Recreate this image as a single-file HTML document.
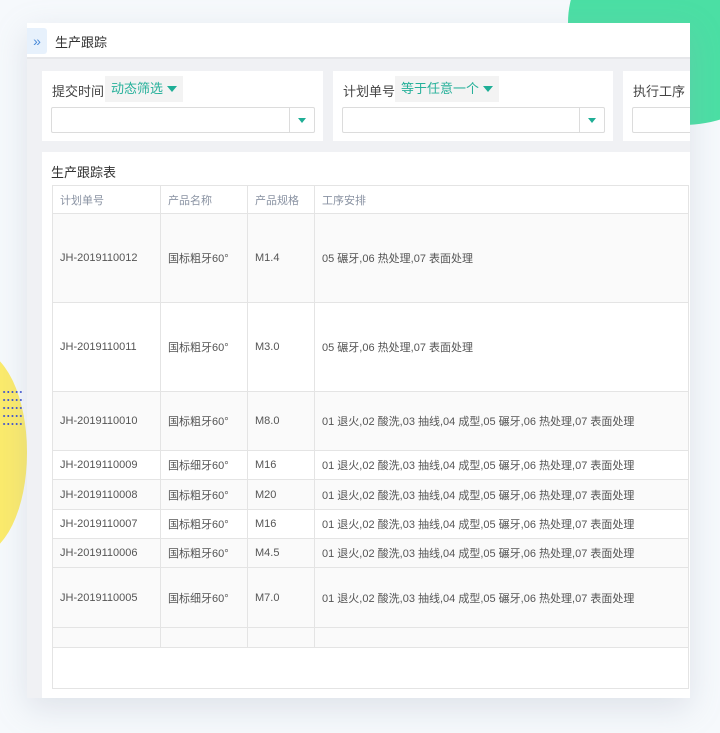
<!DOCTYPE html><html><head><meta charset="utf-8"><style>
*{box-sizing:border-box;margin:0;padding:0}
body{width:720px;height:733px;overflow:hidden;background:#f6f9fc;font-family:"Liberation Sans","Noto Sans CJK SC",sans-serif;position:relative;color:#333}
.abs{position:absolute}
.green{left:568px;top:-80px;width:230px;height:205px;border-radius:50%;background:#4bdfa4}
.yellow{left:-100px;top:350px;width:127px;height:205px;border-radius:0 50px 50px 0 / 0 102px 102px 0;background:#fbeb6c}
.dots{left:2px;top:388px;width:22px;height:38px;background-image:radial-gradient(circle,#3a4fd0 0.8px,transparent 1.2px);background-size:4.2px 8px}
.card{left:27px;top:23px;width:663px;height:675px;background:#f0f1f4;box-shadow:0 10px 30px rgba(150,160,180,.25);overflow:hidden}
.hdr{left:0;top:0;width:663px;height:36px;background:#fff;border-bottom:2px solid #e6e7ea}
.tog{left:0;top:5px;width:20px;height:26px;background:#e7f1fc;border-radius:0 3px 3px 0;color:#4a8ad8;font-size:14px;line-height:26px;text-align:center}
.box{background:#fff;top:48px;height:70px}
.lbl{font-size:13px;color:#444;top:10px;left:10px}
.dd{top:5px;height:26px;background:#f3f3f3;color:#26b09a;font-size:13px;line-height:26px;padding:0 6px}
.tri{display:inline-block;width:0;height:0;border-left:5px solid transparent;border-right:5px solid transparent;border-top:6px solid #1fae96;vertical-align:middle;margin-left:4px;margin-top:-2px}
.inp{top:36px;height:26px;border:1px solid #dcdcdc;border-radius:2px;background:#fff}
.inp .b{position:absolute;right:0;top:0;width:25px;height:24px;border-left:1px solid #dcdcdc;text-align:center;line-height:22px}
.inp .b i{display:inline-block;border-left:4px solid transparent;border-right:4px solid transparent;border-top:5px solid #1fae96}
.panel{left:15px;top:129px;width:648px;height:546px;background:#fff}
table{position:absolute;left:25px;top:162px;border-collapse:collapse;font-size:11px;color:#555}
td{border:1px solid #e4e4e4;padding:0 7px;white-space:nowrap}
th{border:1px solid #e4e4e4;padding:0 7px;font-weight:normal;color:#8a93a3;text-align:left;height:28px;font-size:11px}
tr.g td{background:#fafafa}
</style></head><body>
<div class="abs green"></div>
<div class="abs yellow"></div>
<div class="abs dots"></div>
<div class="abs card">
 <div class="abs hdr"><div class="abs tog">»</div><div class="abs" style="left:28px;top:9px;font-size:13px;color:#333">生产跟踪</div></div>
 <div class="abs box" style="left:15px;width:281px">
  <div class="abs lbl">提交时间</div><div class="abs dd" style="left:63px">动态筛选<span class="tri"></span></div>
  <div class="abs inp" style="left:9px;width:264px"><div class="b"><i></i></div></div>
 </div>
 <div class="abs box" style="left:306px;width:280px">
  <div class="abs lbl">计划单号</div><div class="abs dd" style="left:62px">等于任意一个<span class="tri"></span></div>
  <div class="abs inp" style="left:9px;width:263px"><div class="b"><i></i></div></div>
 </div>
 <div class="abs box" style="left:596px;width:80px">
  <div class="abs lbl">执行工序</div>
  <div class="abs inp" style="left:9px;width:70px"></div>
 </div>
 <div class="abs panel"><div class="abs" style="left:9px;top:10px;font-size:13px;color:#333">生产跟踪表</div></div>
 <table>
  <tr><th style="width:108px">计划单号</th><th style="width:87px">产品名称</th><th style="width:67px">产品规格</th><th style="width:374px">工序安排</th></tr>
  <tr class="g" style="height:89px"><td>JH-2019110012</td><td>国标粗牙60°</td><td>M1.4</td><td>05 碾牙,06 热处理,07 表面处理</td></tr>
  <tr style="height:89px"><td>JH-2019110011</td><td>国标粗牙60°</td><td>M3.0</td><td>05 碾牙,06 热处理,07 表面处理</td></tr>
  <tr class="g" style="height:59px"><td>JH-2019110010</td><td>国标粗牙60°</td><td>M8.0</td><td>01 退火,02 酸洗,03 抽线,04 成型,05 碾牙,06 热处理,07 表面处理</td></tr>
  <tr style="height:29px"><td>JH-2019110009</td><td>国标细牙60°</td><td>M16</td><td>01 退火,02 酸洗,03 抽线,04 成型,05 碾牙,06 热处理,07 表面处理</td></tr>
  <tr class="g" style="height:30px"><td>JH-2019110008</td><td>国标粗牙60°</td><td>M20</td><td>01 退火,02 酸洗,03 抽线,04 成型,05 碾牙,06 热处理,07 表面处理</td></tr>
  <tr style="height:29px"><td>JH-2019110007</td><td>国标粗牙60°</td><td>M16</td><td>01 退火,02 酸洗,03 抽线,04 成型,05 碾牙,06 热处理,07 表面处理</td></tr>
  <tr class="g" style="height:29px"><td>JH-2019110006</td><td>国标粗牙60°</td><td>M4.5</td><td>01 退火,02 酸洗,03 抽线,04 成型,05 碾牙,06 热处理,07 表面处理</td></tr>
  <tr class="g" style="height:60px"><td>JH-2019110005</td><td>国标细牙60°</td><td>M7.0</td><td>01 退火,02 酸洗,03 抽线,04 成型,05 碾牙,06 热处理,07 表面处理</td></tr>
  <tr class="g" style="height:20px"><td></td><td></td><td></td><td></td></tr>
  <tr style="height:41px"><td colspan="4"></td></tr>
 </table>
</div>
</body></html>
